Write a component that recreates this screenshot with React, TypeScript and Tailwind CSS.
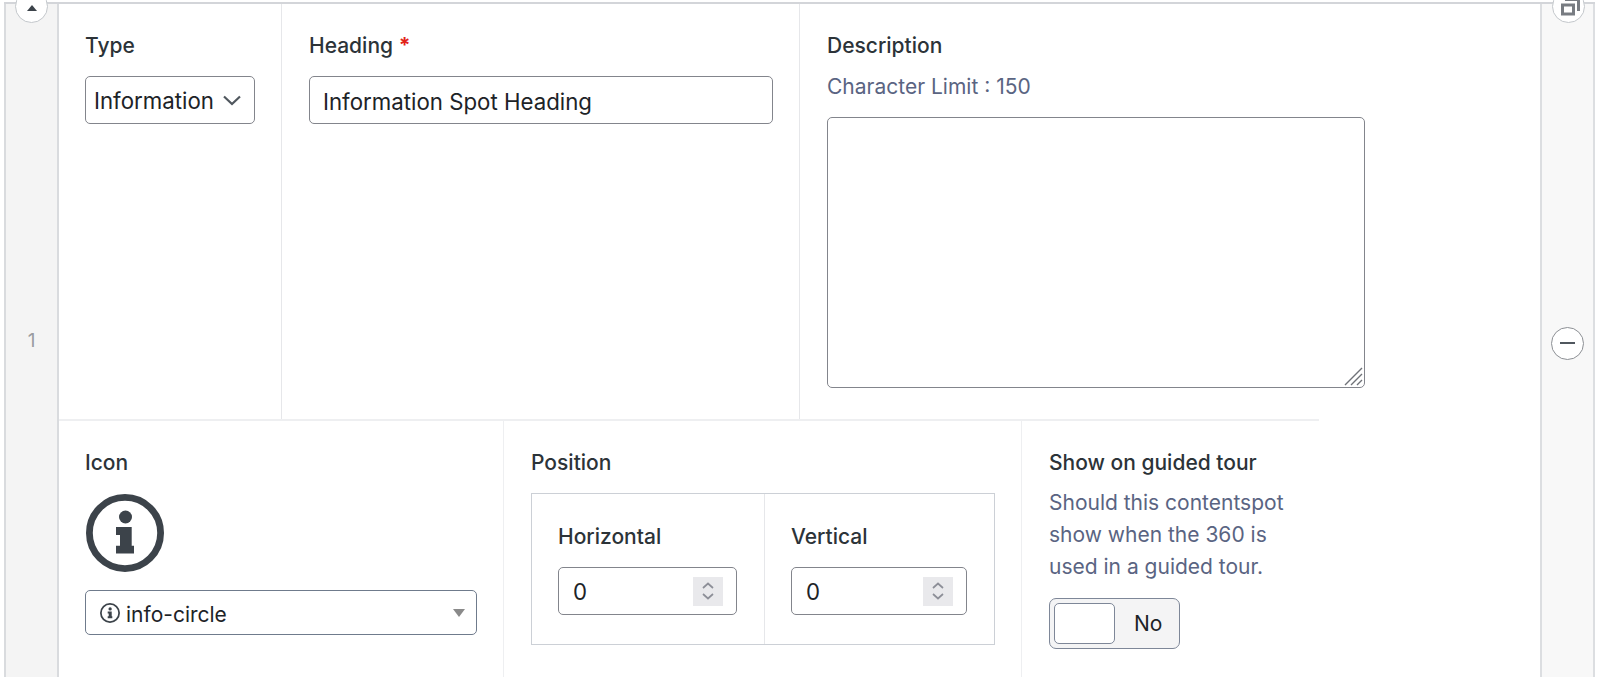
import React from 'react';

const labelClass = 'block text-[21px] leading-[24px] font-medium text-[#2c3338]';
const fieldClass = 'border border-[#83858c] rounded-[5px] bg-white text-[22.25px] text-[#1d2327]';

const InfoIcon: React.FC<{ className: string }> = ({ className }) => (
  <svg viewBox="0 0 78 78" className={className} fill="#3c434a">
    <circle cx="39" cy="39" r="35.6" fill="none" stroke="#3c434a" strokeWidth="6.8" />
    <circle cx="39.5" cy="23" r="6.5" />
    <path d="M30 33H45.7V51.7H48V59.6H30V51.7H34V41H30Z" />
  </svg>
);

const NumberField: React.FC<{ width: string }> = ({ width }) => (
  <div className={`${fieldClass} ${width} h-[48px] flex items-center justify-between pl-[14px] pr-[13px]`}>
    <span className="pt-[2px]">0</span>
    <span className="w-[30px] h-[29px] bg-[#e9e9ec] flex items-center justify-center">
      <svg viewBox="0 0 14 20" className="w-[14px] h-[20px]" fill="none" stroke="#8d8f98" strokeWidth="1.7">
        <path d="M2 7L7 2.5L12 7" />
        <path d="M2 13L7 17.5L12 13" />
      </svg>
    </span>
  </div>
);

export default function App() {
  return (
    <div className="h-[677px] overflow-hidden bg-white pt-[2px] px-[4px] pr-[5px] font-['Inter',sans-serif]">
      <div className="flex h-[720px] border-t-2 border-[#d3d5d9]">
        <div className="relative w-[55px] shrink-0 bg-[#f4f4f4] border-x-2 border-[#d9dbde] flex items-center justify-center pb-[44px] text-[19px] text-[#9a9ca1]">
          <button className="absolute left-[9px] top-[-14px] w-[33px] h-[33px] rounded-full bg-white border border-[#c3c7cb] flex items-center justify-center pt-[2px]">
            <span className="w-0 h-0 border-x-[5px] border-x-transparent border-b-[6px] border-b-[#3c434a]" />
          </button>
          1
        </div>

        <div className="flex-1 min-w-0">
          <div className="flex h-[417px] w-[1260px] border-b-2 border-[#eeeff1]">
            <div className="w-[223px] shrink-0 border-r border-[#e6e7ea] pl-[26px] pt-[30px]">
              <label className={labelClass}>Type</label>
              <div className={`${fieldClass} w-[170px] h-[48px] mt-[18px] flex items-center justify-between pl-[8px] pr-[13px]`}>
                <span className="pt-[2px]">Information</span>
                <svg viewBox="0 0 18 11" className="w-[18px] h-[11px]" fill="none" stroke="#50575e" strokeWidth="2.2">
                  <path d="M1 1.5L9 9L17 1.5" />
                </svg>
              </div>
            </div>
            <div className="w-[518px] shrink-0 border-r border-[#e6e7ea] pl-[27px] pt-[30px]">
              <label className={labelClass}>
                Heading <span className="font-bold text-[#e2231a]">*</span>
              </label>
              <input
                defaultValue="Information Spot Heading"
                className={`${fieldClass} w-[464px] h-[48px] mt-[18px] pl-[13px] pt-[2px] outline-none`}
              />
            </div>
            <div className="flex-1 min-w-0 pl-[27px] pt-[30px] overflow-visible">
              <label className={labelClass}>Description</label>
              <p className="mt-[17px] text-[21px] leading-[24px] text-[#5a6482]">Character Limit : 150</p>
              <div className="relative w-[538px] h-[271px] mt-[18px]">
                <textarea className={`${fieldClass} block w-full h-full resize-none outline-none`} />
                <svg viewBox="0 0 20 20" className="absolute right-[2px] bottom-[2px] w-[20px] h-[20px]" stroke="#6f7278" strokeWidth="1.4">
                  <path d="M2 19L19 2M8 19L19 8M14 19L19 14" />
                </svg>
              </div>
            </div>
          </div>

          <div className="flex h-[300px] w-[1260px]">
            <div className="w-[445px] shrink-0 border-r border-[#eeeff1] pl-[26px] pt-[30px]">
              <label className={labelClass}>Icon</label>
              <InfoIcon className="w-[78px] h-[78px] mt-[19px] ml-px" />
              <div className="w-[392px] h-[45px] mt-[18px] flex items-center gap-[6px] pl-[14px] pr-[11px] border border-[#6f7b8c] rounded-[5px] bg-white text-[21px] text-[#1d2327]">
                <InfoIcon className="w-[20px] h-[20px]" />
                <span className="flex-1 pt-[4px]">info-circle</span>
                <span className="w-0 h-0 border-x-[6px] border-x-transparent border-t-[8px] border-t-[#8a8a8a]" />
              </div>
            </div>
            <div className="w-[518px] shrink-0 border-r border-[#eeeff1] pl-[27px] pt-[30px]">
              <label className={labelClass}>Position</label>
              <div className="flex w-[464px] h-[152px] mt-[18px] border border-[#ccd0d6]">
                <div className="w-[233px] shrink-0 border-r border-[#e6e7ea] pl-[26px] pt-[31px]">
                  <label className={labelClass}>Horizontal</label>
                  <div className="mt-[18px]">
                    <NumberField width="w-[179px]" />
                  </div>
                </div>
                <div className="flex-1 pl-[26px] pt-[31px]">
                  <label className={labelClass}>Vertical</label>
                  <div className="mt-[18px]">
                    <NumberField width="w-[176px]" />
                  </div>
                </div>
              </div>
            </div>
            <div className="flex-1 pl-[27px] pt-[30px]">
              <label className={labelClass}>Show on guided tour</label>
              <p className="mt-[12px] w-[236px] text-[21px] leading-[32px] text-[#5a6482]">
                Should this contentspot show when the 360 is used in a guided tour.
              </p>
              <div className="w-[131px] h-[51px] mt-[15px] border border-[#7e8798] rounded-[7px] bg-[#f4f4f5] flex items-center pl-[4px]">
                <span className="w-[61px] h-[41px] bg-white border border-[#7e8798] rounded-[5px]" />
                <span className="ml-[19px] text-[21px] text-[#1d2327]">No</span>
              </div>
            </div>
          </div>
        </div>

        <div className="relative w-[55px] shrink-0 bg-[#f8f8f8] border-x-2 border-[#dcdee1] flex items-center justify-center pb-[40px]">
          <button className="absolute left-[10px] top-[-14px] w-[33px] h-[33px] rounded-full bg-white border border-[#c3c7cb] flex items-center justify-center">
            <svg viewBox="0 0 22 22" className="w-[22px] h-[22px]" fill="none" stroke="#787c82" strokeWidth="3">
              <path d="M7 3.5H20.5V15" />
              <rect x="4.5" y="9" width="11" height="9" />
            </svg>
          </button>
          <button className="w-[33px] h-[33px] rounded-full bg-white border border-[#8c8f94] flex items-center justify-center">
            <span className="w-[15px] h-[2px] bg-[#50575e]" />
          </button>
        </div>
      </div>
    </div>
  );
}
